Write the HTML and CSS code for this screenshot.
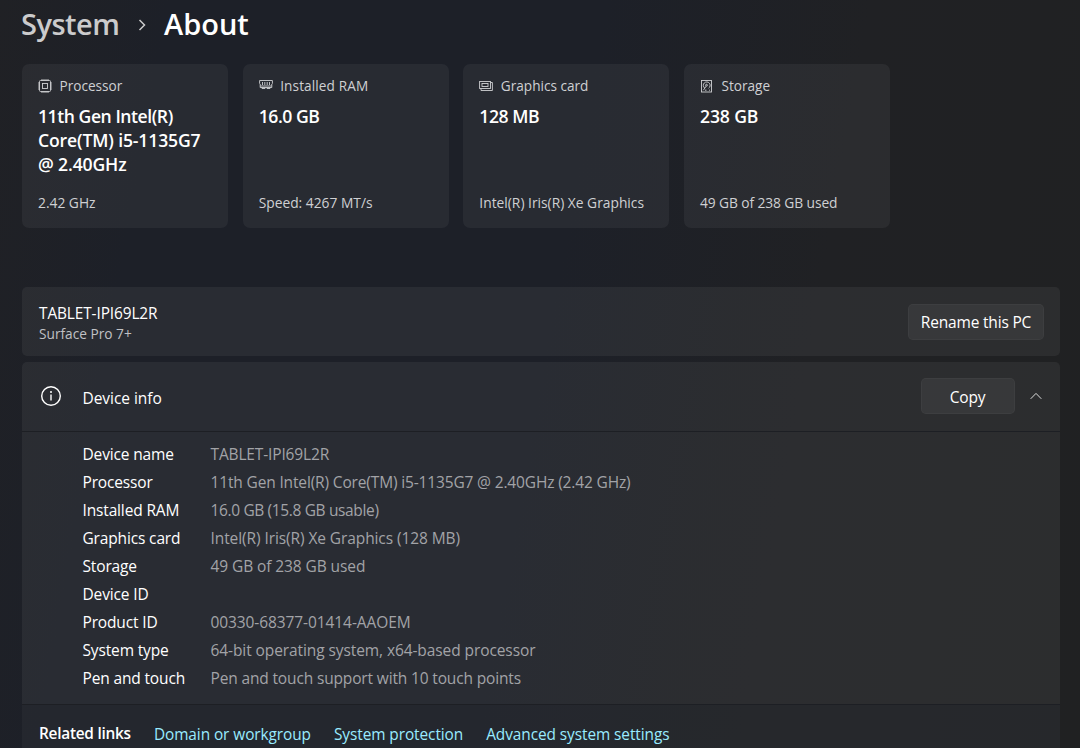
FILE: index.html
```html
<!DOCTYPE html>
<html lang="en">
<head>
  <meta charset="UTF-8">
  <title>System - About</title>
  <link rel="stylesheet" href="styles.css">
</head>
<body>

<h1 class="breadcrumb">
  <span class="parent">System</span>
  <svg class="sep" width="9" height="12" viewBox="0 0 9 12"><path d="M1.5 1 L6.5 6 L1.5 11"/></svg>
  <span class="current">About</span>
</h1>

<div class="cards">
  <div class="card">
    <div class="label">
      <svg width="14" height="14" viewBox="0 0 14 14">
        <rect x="1.5" y="1.5" width="11" height="11" rx="1"/>
        <rect x="4.5" y="4.5" width="5" height="5"/>
        <path d="M4 0V2 M6 0V2 M8 0V2 M10 0V2 M4 12V14 M6 12V14 M8 12V14 M10 12V14 M0 4H2 M0 6H2 M0 8H2 M0 10H2 M12 4H14 M12 6H14 M12 8H14 M12 10H14"/>
      </svg>
      <span>Processor</span>
    </div>
    <div class="value">11th Gen Intel(R)<br><span class="wide">Core(TM) i5-1135G7<br>@ 2.40GHz</span></div>
    <div class="detail">2.42 GHz</div>
  </div>

  <div class="card">
    <div class="label ram">
      <svg width="14" height="14" viewBox="0 0 14 14">
        <path d="M0.6 1.5H13.4V4.5L12.8 5V8.5H1.2V5L0.6 4.5Z M1.2 7H12.8 M3.5 3V6 M5.8 3V6 M8.2 3V6 M10.5 3V6 M3 8.5V9.5H6V8.5 M8 8.5V9.5H11V8.5"/>
      </svg>
      <span>Installed RAM</span>
    </div>
    <div class="value">16.0 GB</div>
    <div class="detail">Speed: 4267 MT/s</div>
  </div>

  <div class="card">
    <div class="label">
      <svg width="14" height="14" viewBox="0 0 14 14">
        <rect x="0.6" y="2.5" width="10.9" height="7"/>
        <rect x="3" y="4.5" width="6" height="3"/>
        <path d="M11.5 3.5H13.4V11.5H2V9.5"/>
      </svg>
      <span>Graphics card</span>
    </div>
    <div class="value">128 MB</div>
    <div class="detail">Intel(R) Iris(R) Xe Graphics</div>
  </div>

  <div class="card">
    <div class="label">
      <svg width="14" height="14" viewBox="0 0 14 14">
        <rect x="1.5" y="1.5" width="10" height="11.5"/>
        <path d="M4.6 9A3.4 3.4 0 1 1 8.6 9.2"/>
        <circle cx="6.5" cy="6.2" r="0.9"/>
        <path d="M6.1 7.2L3.4 11.2 M5 11.2H6.5 M9 11.2H10"/>
      </svg>
      <span>Storage</span>
    </div>
    <div class="value wide">238 GB</div>
    <div class="detail used">49 GB of 238 GB used</div>
  </div>
</div>

<div class="panel pc">
  <div>
    <div class="pc-name">TABLET-IPI69L2R</div>
    <div class="pc-model">Surface Pro 7+</div>
  </div>
  <button class="rename">Rename this PC</button>
</div>

<div class="panel info">
  <div class="info-head">
    <svg class="info-icon" width="22" height="22" viewBox="0 0 22 22">
      <circle cx="11" cy="11" r="9.3"/>
      <path d="M11 9.6V15.4"/>
      <circle class="dot" cx="11" cy="7" r="1"/>
    </svg>
    <span class="info-title">Device info</span>
    <button class="copy">Copy</button>
    <svg class="chevron" width="12" height="8" viewBox="0 0 12 8"><path d="M0.7 6.8 L6 1.4 L11.3 6.8"/></svg>
  </div>

  <dl class="specs">
    <dt>Device name</dt><dd>TABLET-IPI69L2R</dd>
    <dt>Processor</dt><dd>11th Gen Intel(R) Core(TM) i5-1135G7 @ 2.40GHz (2.42 GHz)</dd>
    <dt>Installed RAM</dt><dd class="tight">16.0 GB (15.8 GB usable)</dd>
    <dt>Graphics card</dt><dd class="loose">Intel(R) Iris(R) Xe Graphics (128 MB)</dd>
    <dt>Storage</dt><dd class="loose">49 GB of 238 GB used</dd>
    <dt>Device ID</dt><dd></dd>
    <dt>Product ID</dt><dd class="loose">00330-68377-01414-AAOEM</dd>
    <dt>System type</dt><dd class="loose">64-bit operating system, x64-based processor</dd>
    <dt>Pen and touch</dt><dd>Pen and touch support with 10 touch points</dd>
  </dl>

  <div class="links">
    <b>Related links</b>
    <a>Domain or workgroup</a>
    <a>System protection</a>
    <a>Advanced system settings</a>
  </div>
</div>

</body>
</html>
```
FILE: styles.css
```css
* { box-sizing: border-box; }
html { height: 100%; overflow: hidden; }
body {
  margin: 0;
  padding: 0 20px 0 22px;
  height: 748px;
  overflow: hidden;
  background: linear-gradient(100deg, #202125 0%, #1d2028 14%, #1d2028 50%, #202124 72%, #202122 100%);
  color: #fff;
  font-family: "Open Sans", "Noto Sans", sans-serif;
  font-size: 15.5px;
}
svg { fill: none; stroke: currentColor; flex: none; }

.breadcrumb { display: flex; align-items: center; height: 64px; margin: 0; padding-bottom: 17px; font-size: 29px; font-weight: 600; }
.parent { width: 98px; color: #cbcbcc; letter-spacing: -0.5px; margin-left: -1px; }
.sep { margin: 2px 17px 0 19px; color: #cbcbcc; stroke-width: 1.5; }
.current { letter-spacing: 0; }

.cards { display: grid; grid-template-columns: repeat(4, 1fr); gap: 14.67px; width: 868px; height: 164px; margin-bottom: 59px; }
.card { display: flex; flex-direction: column; padding: 11px 0 15px 16px; border-radius: 7px; background: rgba(255, 255, 255, 0.052); white-space: nowrap; }
.label { display: flex; align-items: center; gap: 7.5px; height: 20px; font-size: 13.6px; color: #cfd0d3; }
.label svg { stroke-width: 0.9; margin-top: 2px; }
.ram { letter-spacing: 0.12px; }
.value { margin-top: 9px; font-size: 17.6px; font-weight: 600; line-height: 24.2px; letter-spacing: -0.45px; }
.wide { letter-spacing: -0.15px; }
.detail { margin-top: auto; font-size: 13.8px; line-height: 20px; color: #cfd0d3; }
.used { letter-spacing: -0.1px; }

.panel { border-radius: 5px; background: rgba(255, 255, 255, 0.055); }
.pc { display: flex; align-items: center; justify-content: space-between; height: 69px; margin-bottom: 6px; padding: 0 16px 0 17px; }
.pc-name { font-size: 15.4px; line-height: 21px; padding-top: 3px; letter-spacing: -0.1px; }
.pc-model { font-size: 13.7px; line-height: 20px; color: #c0c1c5; }
button { height: 36px; padding: 0; border: 1px solid rgba(255, 255, 255, 0.03); border-radius: 5px; background: rgba(255, 255, 255, 0.055); color: #fff; font-family: inherit; font-size: 15.5px; letter-spacing: -0.18px; }
.rename { width: 136px; padding-top: 1px; }
.copy { width: 94px; margin-left: auto; padding-top: 1px; }

.info { height: 400px; }
.info-head { display: flex; align-items: center; height: 70px; padding: 0 18.5px 1px 18px; border-bottom: 1px solid #1d1f24; }
.info-icon { stroke-width: 1.4; }
.info-title { margin: 3px 0 0 20.5px; letter-spacing: -0.05px; }
.dot { fill: currentColor; stroke: none; }
.chevron { margin-left: 15px; stroke-width: 1; color: #ddd; }

.specs { display: grid; grid-template-columns: 128px auto; grid-auto-rows: 28.05px; align-items: center; height: 273px; margin: 0; padding: 8px 0 0 60.5px; line-height: 28px; letter-spacing: -0.15px; border-bottom: 1px solid #1d1f24; }
.specs dd { margin: 0; color: #a2a3a7; }
.specs .tight { letter-spacing: -0.36px; }
.specs .loose { letter-spacing: -0.09px; }

.links { display: flex; gap: 23px; height: 57px; padding: 19px 0 0 17px; background: rgba(29, 32, 40, 0.4); white-space: nowrap; line-height: 22px; font-size: 15.4px; letter-spacing: -0.07px; }
.links b { font-weight: 600; letter-spacing: -0.25px; margin-top: -1px; }
.links a { color: #99ebff; }
```
